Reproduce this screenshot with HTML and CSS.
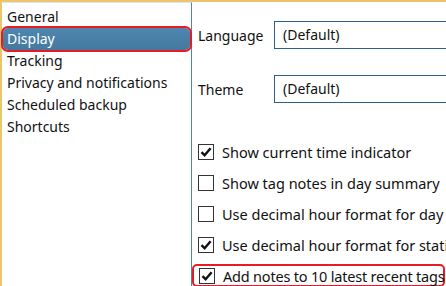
FILE: index.html
```html
<!DOCTYPE html>
<html lang="en">

<head>
    <meta charset="UTF-8">
    <title>Settings</title>
    <link rel="stylesheet" href="styles.css">
</head>

<body>
    <div class="window">
        <ul class="nav">
            <li>General</li>
            <li class="active">Display</li>
            <li>Tracking</li>
            <li>Privacy and notifications</li>
            <li>Scheduled backup</li>
            <li>Shortcuts</li>
        </ul>

        <div class="content">
            <div class="field">
                <span class="label">Language</span>
                <div class="select">(Default)</div>
            </div>
            <div class="field">
                <span class="label">Theme</span>
                <div class="select">(Default)</div>
            </div>

            <div class="checks">
                <div class="check">
                    <span class="box on"><svg viewBox="0 0 14 14"><path d="M2.5 7.2 L5.6 10.3 L11.6 3.2" /></svg></span>
                    Show current time indicator
                </div>
                <div class="check">
                    <span class="box"></span>
                    Show tag notes in day summary
                </div>
                <div class="check">
                    <span class="box"></span>
                    Use decimal hour format for day summary
                </div>
                <div class="check">
                    <span class="box on"><svg viewBox="0 0 14 14"><path d="M2.5 7.2 L5.6 10.3 L11.6 3.2" /></svg></span>
                    Use decimal hour format for statistics
                </div>
                <div class="check marked">
                    <span class="box on"><svg viewBox="0 0 14 14"><path d="M2.5 7.2 L5.6 10.3 L11.6 3.2" /></svg></span>
                    Add notes to 10 latest recent tags
                </div>
            </div>
        </div>
    </div>
</body>

</html>
```

FILE: styles.css
```css
/* Base */
body {
    margin: 0;
    background: #fff;
    font-family: "Noto Sans", sans-serif;
    font-size: 14px;
    color: #111;
    overflow: hidden;
}

.window {
    display: flex;
    height: 286px;
    border-top: 2px solid #ecc46a;
    border-left: 2px solid #ecc46a;
    box-sizing: border-box;
}

/* Left list */
.nav {
    list-style: none;
    margin: 0;
    padding: 3px 0 0 1px;
    width: 188px;
    flex-shrink: 0;
    border-right: 1px solid #4d86b3;
    border-top: 1px solid #dde6ee;
}

.nav li {
    height: 22px;
    line-height: 22px;
    padding-left: 4px;
    white-space: nowrap;
}

.nav li.active {
    background: linear-gradient(#4f86ae, #44799f);
    color: #fff;
    outline: 2px solid #ea1a24;
    outline-offset: 0;
    border-radius: 5px;
    margin-right: 1px;
}

/* Right side */
.content {
    flex: 1;
    padding: 19px 0 0 6px;
    min-width: 0;
    overflow: hidden;
}

.field {
    display: flex;
    align-items: center;
    margin-bottom: 26px;
}

.label {
    width: 76px;
    flex-shrink: 0;
}

.select {
    flex: 1;
    height: 28px;
    line-height: 26px;
    box-sizing: border-box;
    border: 1px solid #2b5f8e;
    border-right: none;
    padding-left: 8px;
}

.checks {
    margin-top: 33px;
    font-size: 14.5px;
}

.check {
    display: flex;
    align-items: center;
    height: 31px;
    white-space: nowrap;
    gap: 8px;
}

.box {
    width: 16px;
    height: 16px;
    box-sizing: border-box;
    border: 1px solid #333;
    background: #fff;
    flex-shrink: 0;
    display: flex;
}

.box svg {
    width: 14px;
    height: 14px;
    fill: none;
    stroke: #111;
    stroke-width: 2.4;
}

.check.marked {
    margin-left: -6px;
    padding-left: 5px;
    height: 23px;
    margin-top: 4px;
    width: 253px;
    border: 2px solid #ea1a24;
    border-radius: 5px;
    box-sizing: border-box;
    letter-spacing: -0.2px;
}
```
